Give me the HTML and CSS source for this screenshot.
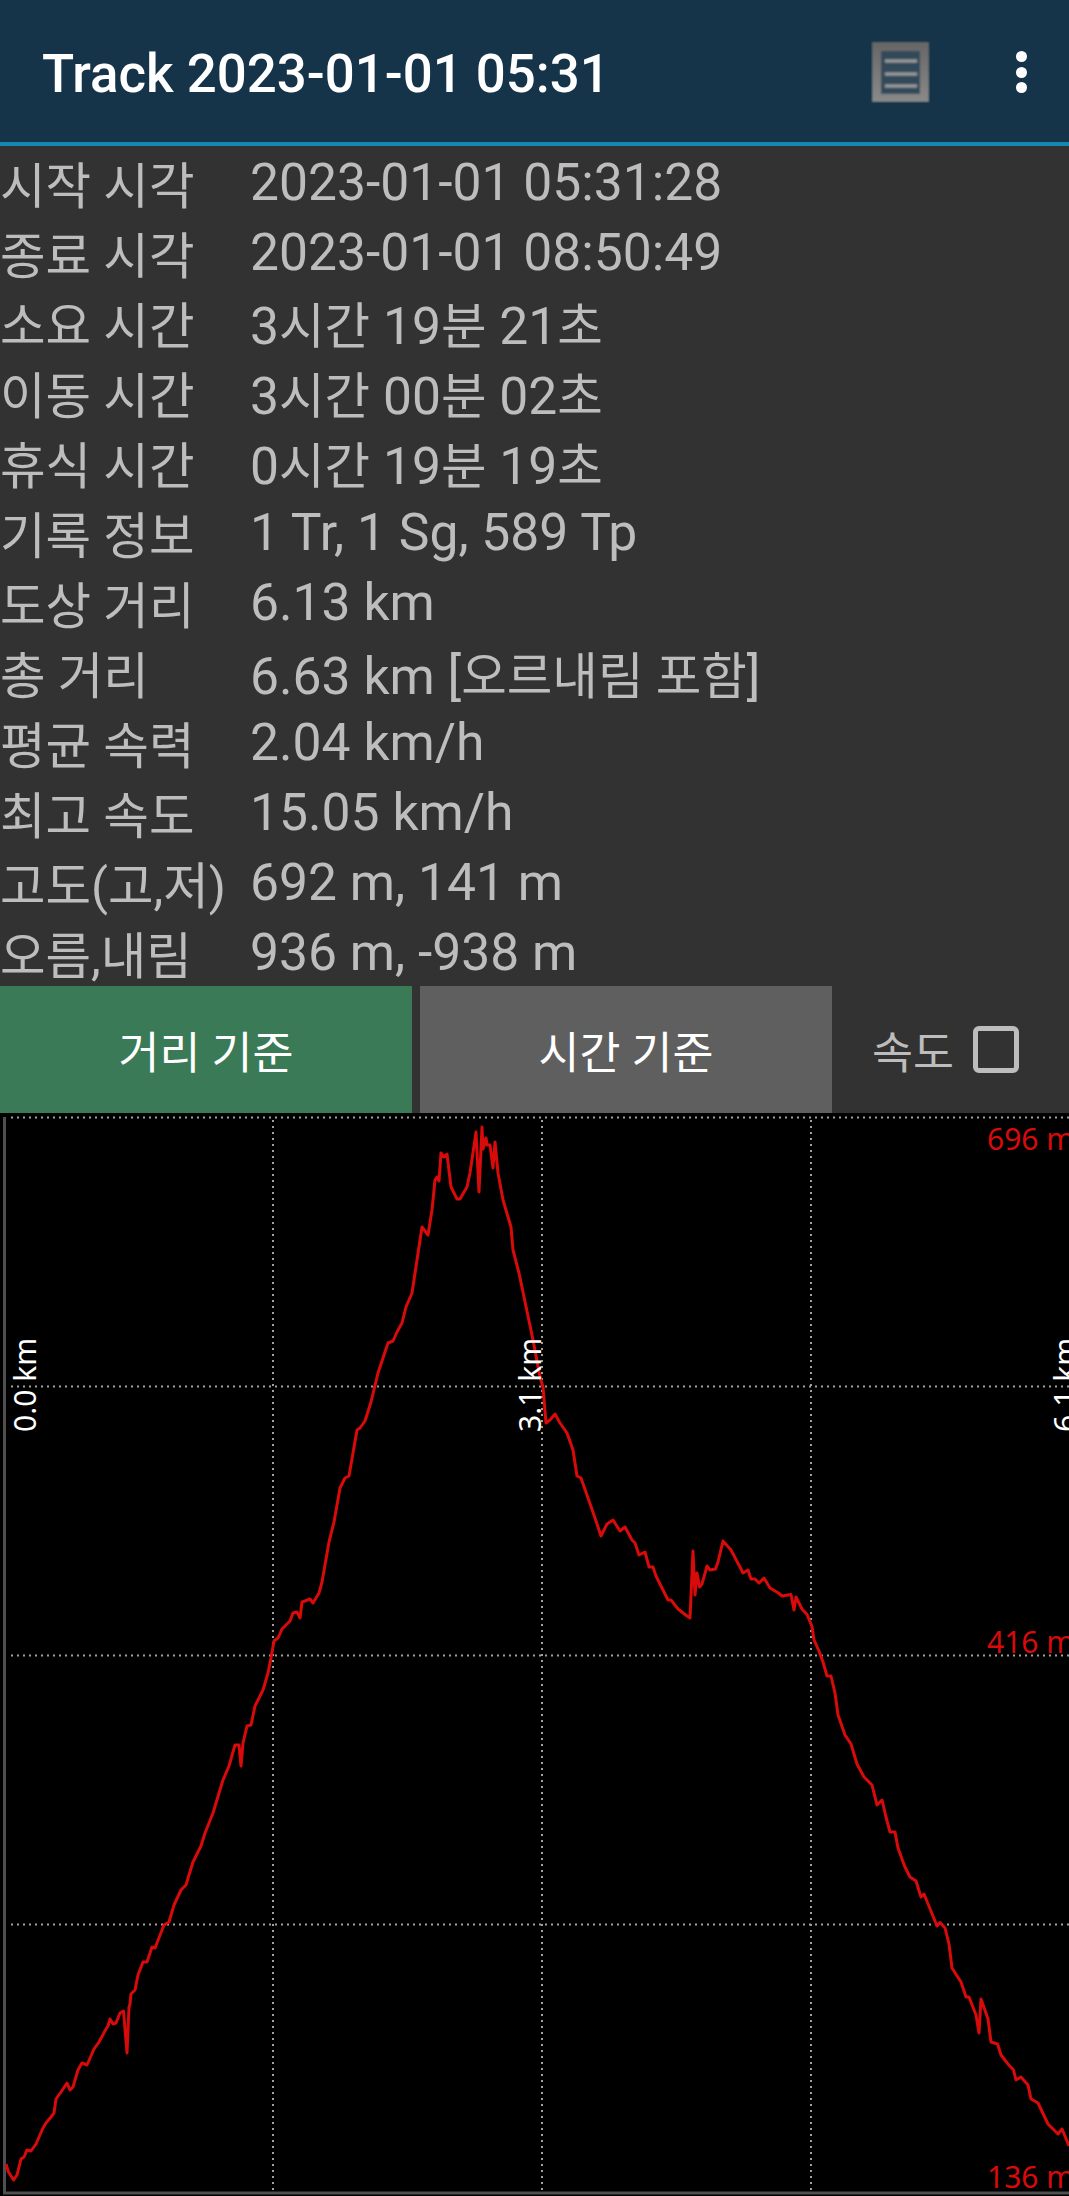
FILE: index.html
```html
<!doctype html>
<html lang="ko">
  <head>
    <meta charset="UTF-8" />
    <title>Track 2023-01-01 05:31</title>
    <link rel="stylesheet" href="styles.css">
  </head>
  <body>
    <header class="appbar">
      <h1 class="title">Track 2023-01-01 05:31</h1>
      <svg class="list-icon" width="59" height="62" viewBox="0 0 59 62">
        <defs>
          <filter id="soft"><feGaussianBlur stdDeviation="1" /></filter>
          <linearGradient id="tile" x1="0" y1="0" x2="0" y2="1">
            <stop offset="0" stop-color="#666" />
            <stop offset="1" stop-color="#8a8a8a" />
          </linearGradient>
        </defs>
        <g filter="url(#soft)">
          <rect x="1" y="1" width="57" height="60" fill="url(#tile)" />
          <rect x="10" y="10" width="39" height="43" fill="#33495a" />
          <path d="M14 20H46M14 33H46M14 45H46" stroke="#a0a0a0" stroke-width="3" />
        </g>
      </svg>
      <div class="more">
        <span class="dot"></span>
        <span class="dot"></span>
        <span class="dot"></span>
      </div>
    </header>

    <dl class="info">
      <div class="row"><dt>시작 시각</dt><dd>2023-01-01 05:31:28</dd></div>
      <div class="row"><dt>종료 시각</dt><dd>2023-01-01 08:50:49</dd></div>
      <div class="row"><dt>소요 시간</dt><dd>3<span class="ko">시간</span> 19<span class="ko">분</span> 21<span class="ko">초</span></dd></div>
      <div class="row"><dt>이동 시간</dt><dd>3<span class="ko">시간</span> 00<span class="ko">분</span> 02<span class="ko">초</span></dd></div>
      <div class="row"><dt>휴식 시간</dt><dd>0<span class="ko">시간</span> 19<span class="ko">분</span> 19<span class="ko">초</span></dd></div>
      <div class="row"><dt>기록 정보</dt><dd>1 Tr, 1 Sg, 589 Tp</dd></div>
      <div class="row"><dt>도상 거리</dt><dd>6.13 km</dd></div>
      <div class="row"><dt>총 거리</dt><dd>6.63 km [<span class="ko">오르내림 포함</span>]</dd></div>
      <div class="row"><dt>평균 속력</dt><dd>2.04 km/h</dd></div>
      <div class="row"><dt>최고 속도</dt><dd>15.05 km/h</dd></div>
      <div class="row"><dt>고도(고,저)</dt><dd>692 m, 141 m</dd></div>
      <div class="row"><dt>오름,내림</dt><dd>936 m, -938 m</dd></div>
    </dl>

    <div class="controls">
      <button class="btn btn-active" type="button">거리 기준</button>
      <button class="btn" type="button">시간 기준</button>
      <label class="speed">속도<span class="check"></span></label>
    </div>

    <svg class="chart" width="1069" height="1083" viewBox="0 1113 1069 1083">
      <path class="axis" d="M4.5 1117V2193H1069" />
      <path class="grid" d="M11 1117.5H1069M11 1386.5H1069M11 1655.5H1069M11 1924.5H1069" />
      <path class="grid" d="M273 1120V2190M542 1120V2190M811 1120V2190" />
      <text class="y-label" x="987" y="1150">696 m</text>
      <text class="y-label" x="987" y="1653">416 m</text>
      <text class="y-label" x="987" y="2188">136 m</text>
      <polyline class="track" points="6,2164 8.5,2172 13.6,2180 17,2175 21,2159 24,2157 27,2150 31,2151 36,2144 43,2128 46,2123 51,2117 54,2113 56,2099 61,2092 67,2083 70,2090 73,2087 78,2070 82,2063 87,2065 94,2049 99,2042 106,2029 108,2026 110,2019 113,2024 116,2023 120,2013 123.5,2011 127,2053 129,2007 130,2004 131,1994 135,1990 138,1975 143,1962 147,1962 152,1947 155,1948 164,1925 169,1922 174,1905 181,1890 186,1885 189,1875 193,1862 201,1846 205,1833 213,1813 223,1780 229,1766 235,1745 239,1745 241,1766 243,1743 247,1726 251,1725 255,1706 263,1690 268,1673 271,1658 274,1641 278,1638 282,1629 290,1621 293,1613 297,1612 300,1618 302,1602 305,1601 310,1599 313,1603 319,1593 322,1582 329,1542 334,1522 340,1488 345,1478 349,1476 357,1430 360,1428 365,1421 371,1402 378,1373 383,1358 388,1343 393,1341 397,1332 402,1323 406,1307 412,1293 417,1260 422,1227 428,1235 432,1210 435,1180 437,1177 439,1181 441,1153 444,1157 447,1154 451,1187 457,1199 460,1199 467,1187 470,1173 476,1132 479,1192 482,1127 483,1149 486,1138 487,1145 490,1145 493,1168 495,1142 498,1173 503,1200 511,1227 513,1250 519,1273 533,1340 540,1377 543,1387 546,1423 550,1420 555,1414 560,1423 567,1433 573,1450 577,1476 581,1478 588,1498 595,1518 601,1536 607,1524 613,1520 620,1531 625,1527 632,1540 635,1543 639,1555 645,1552 649,1567 653,1567 656,1576 660,1584 668,1600 671,1600 678,1609 687,1616 690,1618 693,1551 695,1595 697,1573 699.5,1587 702,1584 707,1566 710,1570 715.5,1569 718,1562 723,1541 731,1550 741,1569 743,1573 748,1570 751,1579 755,1579 759,1583 764,1578 770,1588 778.5,1593 782,1596 791,1594.5 794,1610 796,1597 802,1609 807,1614.5 812,1626.5 814,1640 819,1651 823,1662 827,1676 831,1676 835,1693 838,1715 845,1735 851,1744 857,1764 864,1777 872,1785 877,1805 882,1800 886,1817 890,1832 895,1832 898,1848 904.5,1866 910,1877 916,1881 921,1897 924,1894 937,1926 940,1922.5 945,1928 949,1944 952,1968 961,1982 966,1997 969,1997 976,2015 979,2033 981,1999 988,2019 991,2042 997.5,2044 1001,2055 1008,2064 1013.5,2070 1016,2080 1021,2077 1028,2085 1031,2099 1038,2103 1048,2124 1053,2129 1058,2134 1062,2129 1069,2146" />
      <text class="x-label" transform="translate(36 1432) rotate(-90)">0.0 km</text>
      <text class="x-label" transform="translate(541 1432) rotate(-90)">3.1 km</text>
      <text class="x-label" transform="translate(1076 1432) rotate(-90)">6.1 km</text>
    </svg>
  </body>
</html>
```

FILE: styles.css
```css
html,
body {
  margin: 0;
  padding: 0;
}
body {
  width: 1069px;
  height: 2196px;
  overflow: hidden;
  background-color: #323232;
  font-family: Roboto, "Noto Sans CJK KR", sans-serif;
}

.appbar {
  box-sizing: content-box;
  height: 140px;
  display: flex;
  align-items: center;
  padding: 2px 42px 0 42px;
  background-color: #15344a;
  border-bottom: 4px solid #1488b0;
}
.title {
  flex: 1;
  margin: 4px 0 0;
  font-size: 52.8px;
  font-weight: 500;
  color: #fff;
  white-space: nowrap;
}
.list-icon {
  display: block;
  margin-right: 86px;
}
.more {
  display: flex;
  flex-direction: column;
  gap: 4.5px;
}
.dot {
  width: 11px;
  height: 11px;
  border-radius: 50%;
  background-color: #fff;
}

.info {
  margin: 0;
  height: 840px;
}
.row {
  box-sizing: border-box;
  display: flex;
  align-items: center;
  height: 70px;
  padding-top: 3px;
  font-size: 51.6px;
  color: #bdbdbd;
}
.row dt {
  width: 250px;
  font-size: 49.5px;
  white-space: nowrap;
}
.row dd {
  margin: 0;
  white-space: nowrap;
}
.ko {
  font-size: 49.5px;
}

.controls {
  display: flex;
  height: 127px;
}
.btn {
  width: 412px;
  margin-right: 8px;
  padding: 0;
  border: none;
  background-color: #5f5f5f;
  color: #fff;
  font-family: inherit;
  font-size: 44.5px;
}
.btn-active {
  background-color: #3a7a56;
}
.speed {
  display: flex;
  align-items: center;
  margin-left: 32px;
  color: #bdbdbd;
  font-size: 44.5px;
}
.check {
  width: 36px;
  height: 37px;
  margin-left: 19px;
  border: 5px solid #bdbdbd;
  border-radius: 6px;
}

.chart {
  display: block;
  background-color: #000;
}
.axis {
  fill: none;
  stroke: #4f4f4f;
  stroke-width: 3;
}
.grid {
  fill: none;
  stroke: #a0a0a0;
  stroke-width: 2;
  stroke-dasharray: 2 4;
}
.track {
  fill: none;
  stroke: #d80a0a;
  stroke-width: 3;
  stroke-linejoin: round;
}
.y-label {
  fill: #d80a0a;
  font-family: "Noto Sans", sans-serif;
  font-size: 30px;
}
.x-label {
  fill: #fff;
  font-family: "Noto Sans", sans-serif;
  font-size: 30px;
}
```
